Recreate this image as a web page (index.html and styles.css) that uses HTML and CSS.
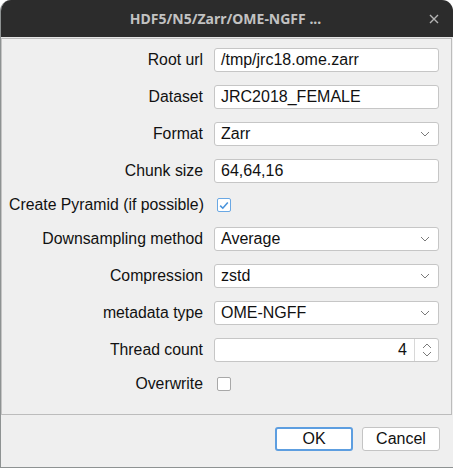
FILE: index.html
```html
<!DOCTYPE html>
<html>
<head>
<meta charset="utf-8">
<link rel="stylesheet" href="styles.css">
</head>
<body>
<div class="window">
  <div class="titlebar">
    <span class="title">HDF5/N5/Zarr/OME-NGFF ...</span>
    <svg class="close" width="10" height="10" viewBox="0 0 10 10"><path d="M1 1L9 9M9 1L1 9" stroke="#b4b4b4" stroke-width="1.4"/></svg>
  </div>
  <div class="frame">
    <div class="form">
      <label class="lbl">Root url</label>
      <div class="field text">/tmp/jrc18.ome.zarr</div>

      <label class="lbl">Dataset</label>
      <div class="field text">JRC2018_FEMALE</div>

      <label class="lbl">Format</label>
      <div class="field combo"><span>Zarr</span><svg class="chev" width="10" height="6" viewBox="0 0 10 6"><path d="M1 1L5 5L9 1" fill="none" stroke="#7a7a7a" stroke-width="1"/></svg></div>

      <label class="lbl">Chunk size</label>
      <div class="field text">64,64,16</div>

      <label class="lbl">Create Pyramid (if possible)</label>
      <div class="chkrow"><span class="check on"><svg width="10" height="9" viewBox="0 0 10 9"><path d="M1.2 4.6L3.8 7.2L8.8 1.4" fill="none" stroke="#4a94dc" stroke-width="1.6"/></svg></span></div>

      <label class="lbl">Downsampling method</label>
      <div class="field combo"><span>Average</span><svg class="chev" width="10" height="6" viewBox="0 0 10 6"><path d="M1 1L5 5L9 1" fill="none" stroke="#7a7a7a" stroke-width="1"/></svg></div>

      <label class="lbl">Compression</label>
      <div class="field combo"><span>zstd</span><svg class="chev" width="10" height="6" viewBox="0 0 10 6"><path d="M1 1L5 5L9 1" fill="none" stroke="#7a7a7a" stroke-width="1"/></svg></div>

      <label class="lbl">metadata type</label>
      <div class="field combo"><span>OME-NGFF</span><svg class="chev" width="10" height="6" viewBox="0 0 10 6"><path d="M1 1L5 5L9 1" fill="none" stroke="#7a7a7a" stroke-width="1"/></svg></div>

      <label class="lbl">Thread count</label>
      <div class="field spin"><span class="spinval">4</span><span class="spinbtns"><svg width="10" height="16" viewBox="0 0 10 16"><path d="M1 6L5 2L9 6M1 10L5 14L9 10" fill="none" stroke="#7a7a7a" stroke-width="1"/></svg></span></div>

      <label class="lbl">Overwrite</label>
      <div class="chkrow"><span class="check"></span></div>
    </div>
  </div>
  <div class="buttons">
    <button class="btn ok">OK</button>
    <button class="btn">Cancel</button>
  </div>
</div>
</body>
</html>
```

FILE: styles.css
```css
html, body {
  margin: 0;
  padding: 0;
  background: #ffffff;
}
.window {
  width: 452px;
  height: 467px;
  background: #efefef;
  border-left: 1px solid #8e9292;
  border-bottom: 1px solid #8e9292;
  border-radius: 11px 11px 0 0;
  overflow: hidden;
  display: flex;
  flex-direction: column;
  font-family: "Liberation Sans", Arial, sans-serif;
  font-size: 16px;
  color: #111;
}
.titlebar {
  height: 37px;
  flex: none;
  background: #2c2c2c;
  position: relative;
  display: flex;
  align-items: center;
  justify-content: center;
  border-bottom: 1px solid #e6e6e6;
}
.title {
  font-family: "Noto Sans", sans-serif;
  font-weight: 700;
  font-size: 14px;
  color: #c2c2c2;
  margin-right: 3px;
}
.close {
  position: absolute;
  right: 14px;
  top: 14px;
}
.frame {
  height: 366px;
  flex: none;
  border: 1px solid #bcbcbc;
  border-left-color: #c4c4c4;
  margin-right: 1px;
  padding: 9px 12px 0 7px;
}
.form {
  display: grid;
  grid-template-columns: 194px 1fr;
  column-gap: 11px;
  row-gap: 13px;
  align-items: center;
}
.lbl {
  text-align: right;
  white-space: nowrap;
  line-height: 18px;
  font-size: 15.8px;
}
.field {
  height: 24px;
  box-sizing: border-box;
  background: #ffffff;
  border: 1px solid #c6c6c6;
  border-radius: 3px;
  display: flex;
  align-items: center;
  padding: 0 6px;
  white-space: nowrap;
}
.combo {
  justify-content: space-between;
  padding-right: 8px;
}
.chev {
  display: block;
}
.spin {
  padding: 0;
}
.spinval {
  flex: 1;
  text-align: right;
  padding-right: 7px;
}
.spinbtns {
  width: 23px;
  height: 100%;
  border-left: 1px solid #d8d8d8;
  display: flex;
  align-items: center;
  justify-content: center;
}
.spinbtns svg {
  display: block;
}
.chkrow {
  height: 18px;
  display: flex;
  align-items: center;
  padding-left: 3px;
}
.check {
  width: 14px;
  height: 14px;
  box-sizing: border-box;
  border: 1px solid #a8a8a8;
  border-radius: 2px;
  background: #ffffff;
  display: flex;
  align-items: center;
  justify-content: center;
}
.check.on {
  border-color: #6aa8e4;
}
.check svg {
  display: block;
}
.buttons {
  display: flex;
  justify-content: flex-end;
  gap: 9px;
  padding: 12px 13px 0 0;
}
.btn {
  width: 78px;
  height: 24px;
  box-sizing: border-box;
  background: #ffffff;
  border: 1px solid #c4c4c4;
  border-radius: 3px;
  font-family: "Liberation Sans", Arial, sans-serif;
  font-size: 16px;
  color: #111;
  padding: 0;
}
.btn.ok {
  border: 2px solid #5d9ee0;
}
```
